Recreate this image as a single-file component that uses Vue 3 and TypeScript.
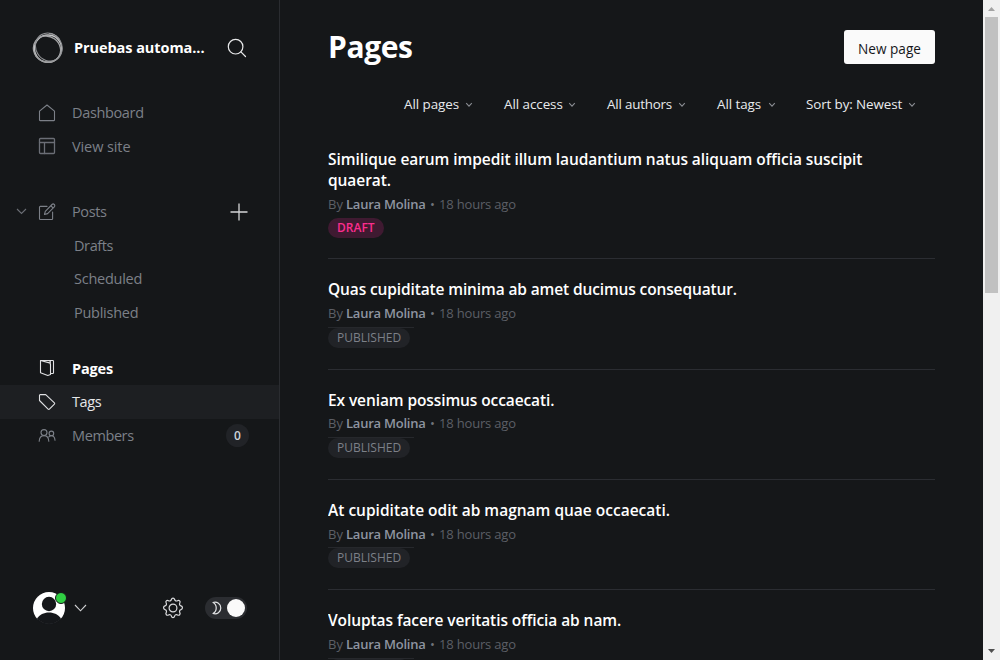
<script setup lang="ts">
interface Page {
  title: string
  status: 'draft' | 'published'
  fit: string
}

const filters = [
  { label: 'All pages', cls: 'f-pages' },
  { label: 'All access', cls: 'f-access' },
  { label: 'All authors', cls: 'f-authors' },
  { label: 'All tags', cls: 'f-tags' },
  { label: 'Sort by: Newest', cls: 'f-sort' },
]

const pages: Page[] = [
  { title: 'Similique earum impedit illum laudantium natus aliquam officia suscipit quaerat.', status: 'draft', fit: 't1' },
  { title: 'Quas cupiditate minima ab amet ducimus consequatur.', status: 'published', fit: 't2' },
  { title: 'Ex veniam possimus occaecati.', status: 'published', fit: 't3' },
  { title: 'At cupiditate odit ab magnam quae occaecati.', status: 'published', fit: 't4' },
  { title: 'Voluptas facere veritatis officia ab nam.', status: 'published', fit: 't5' },
]
</script>

<template>
  <div class="app">
    <aside class="sidebar">
      <header class="brand">
        <svg class="logo" width="32" height="32" viewBox="0 0 32 32" fill="none">
          <circle cx="16" cy="16.600" r="13.600" stroke="#c4c5c6" stroke-width="1.500" />
          <ellipse cx="15.700" cy="17" rx="14" ry="12.800" stroke="#a4a5a7" stroke-width="1.300" transform="rotate(35 15 16)" />
          <ellipse cx="17.200" cy="15.600" rx="13" ry="14.400" stroke="#909295" stroke-width="1.100" transform="rotate(-30 16 16)" />
          <path d="M3.500 24C9 31 20 32 26 26M17 1.500c4 .2 8 2 10.500 6" stroke="#9a9b9d" />
        </svg>
        <span class="site">Pruebas automa...</span>
        <svg class="search" width="20" height="20" viewBox="0 0 20 20" fill="none" stroke="#e8e9ea" stroke-width="1.200" stroke-linecap="round">
          <circle cx="8.600" cy="8.700" r="7.300" /><path d="M13.900 13.900 18.500 18.500" />
        </svg>
      </header>

      <nav class="nav">
        <div class="group g1">
          <a class="row">
            <svg class="ico" viewBox="0 0 18 18"><path d="M1.5 7.2 9 1l7.500 6.200v8.800a.6.6 0 0 1-.6.6H2.100a.6.6 0 0 1-.6-.6z" /></svg>
            <span class="l-dash">Dashboard</span>
          </a>
          <a class="row">
            <svg class="ico dim" viewBox="0 0 18 18"><rect x="1.500" y="1.500" width="15" height="15" rx="1" /><path d="M1.500 5.500h15M6.500 5.500v11" /></svg>
            <span class="l-view">View site</span>
          </a>
        </div>
        <div class="group g2">
          <a class="row">
            <svg class="chev" width="11" height="7" viewBox="0 0 11 7"><path d="M1 1l4.500 4.500L10 1" /></svg>
            <svg class="ico" viewBox="0 0 18 18"><path d="M9 3.400H2.300a.8.800 0 0 0-.8.800v11.500c0 .5.300.8.800.8h11.500a.8.800 0 0 0 .8-.8V9M6.500 11.500l.8-3.200 6.700-6.800a1.500 1.500 0 0 1 2.300 2.300L9.600 10.600zM12.800 2.700l2.300 2.300" /></svg>
            <span class="l-posts">Posts</span>
            <svg class="plus" width="18" height="18" viewBox="0 0 18 18"><path d="M9 .5v17M.5 9h17" /></svg>
          </a>
          <a class="row sub"><span class="l-drafts">Drafts</span></a>
          <a class="row sub"><span class="l-sched">Scheduled</span></a>
          <a class="row sub"><span class="l-publ">Published</span></a>
        </div>
        <div class="group g3">
          <a class="row active">
            <svg class="ico" viewBox="0 0 18 18"><path d="M2.500 1.500h12.200a.8.800 0 0 1 .8.800v11.400a.8.800 0 0 1-.8.800h-2.200M2.500 1.500v12.300l7.300 2.700 2.700-.9V5.300c0-.8-.3-1.100-1-1.400L2.500 1.500M10.500 1.500l1.800.8v3" /></svg>
            <span class="l-pages">Pages</span>
          </a>
          <a class="row hover">
            <svg class="ico" viewBox="0 0 18 18"><path d="M1.500 2.300v5.200l8.600 8.700a.9.900 0 0 0 1.300 0l5-5.100a.9.900 0 0 0 0-1.300L7.700 1.600H2.200a.7.700 0 0 0-.7.700z" /></svg>
            <span class="l-tags">Tags</span>
          </a>
          <a class="row">
            <svg class="ico" viewBox="0 0 18 18"><circle cx="6" cy="6.600" r="3" /><circle cx="13.400" cy="7.400" r="2.300" /><path d="M1.200 15.200c.2-3.300 2-5.600 4.800-5.600s4.600 2.300 4.800 5.600M10.800 10.900c.7-.8 1.500-1.200 2.600-1.200 2.100 0 3.400 1.900 3.600 4.500" /></svg>
            <span class="l-members">Members</span>
            <span class="count">0</span>
          </a>
        </div>
      </nav>

      <footer class="foot">
        <div class="user">
          <svg width="34" height="34" viewBox="0 0 34 34">
            <defs><clipPath id="face"><circle cx="17" cy="17" r="16" /></clipPath></defs>
            <g clip-path="url(#face)">
              <rect width="34" height="34" fill="#fff" />
              <circle cx="17" cy="13" r="7.200" fill="#15171a" />
              <path d="M5 27.500C7.500 23.800 11.800 21.500 17 21.500s9.500 2.300 12 6V34H5z" fill="#15171a" />
            </g>
            <path d="M5.500 28.500a16 16 0 0 0 23 0" fill="none" stroke="#15171a" stroke-width="1.600" />
          </svg>
          <i class="online"></i>
        </div>
        <svg class="user-chev" width="13" height="8" viewBox="0 0 13 8"><path d="M1 1l5.500 5.800L12 1" /></svg>
        <svg class="gear" width="22" height="22" viewBox="0 0 22 22">
          <circle cx="11" cy="11" r="3.900" />
          <path d="M9.400 2.500c.5-1.900 2.700-1.900 3.200 0 .3 1.300 1.700 1.900 2.900 1.200 1.700-1 3.300.6 2.300 2.300-.7 1.200-.1 2.600 1.200 2.900 1.900.5 1.900 3.300 0 3.800-1.300.3-1.900 1.700-1.200 2.900 1 1.700-.6 3.300-2.300 2.300-1.200-.7-2.600-.1-2.900 1.200-.5 1.900-2.700 1.900-3.200 0-.3-1.300-1.700-1.900-2.900-1.200-1.700 1-3.300-.6-2.300-2.300.7-1.200.1-2.600-1.200-2.900-1.900-.5-1.900-3.300 0-3.800C4.300 8.600 4.900 7.200 4.200 6c-1-1.700.6-3.300 2.300-2.300 1.200.7 2.600.1 2.900-1.200z" />
        </svg>
        <div class="toggle">
          <svg width="10" height="14" viewBox="0 0 10 14"><path d="M1 1.500c4-1.300 7.800 1.400 7.800 5.500S5 13.800 1 12.500C5.300 10.300 5.300 3.700 1 1.500z" /></svg>
          <i class="knob"></i>
        </div>
      </footer>
    </aside>

    <main class="main">
      <header class="top">
        <h1>Pages</h1>
        <button class="new"><span>New page</span></button>
      </header>
      <div class="filters">
        <div v-for="f in filters" :key="f.label" class="filter" :class="f.cls">
          <span>{{ f.label }}</span>
          <svg width="8" height="6" viewBox="0 0 8 6"><path d="M1.200 1.200 4 4.200l2.800-3" /></svg>
        </div>
      </div>
      <ul class="list">
        <li v-for="p in pages" :key="p.title" class="item" :class="{ tall: p.status === 'draft' }">
          <h3 :class="p.fit">{{ p.title }}</h3>
          <p class="meta"><span class="by">By</span><b>Laura Molina</b><span class="dot">•</span><span class="ago">18 hours ago</span></p>
          <div class="status" :class="p.status"><span class="badge">{{ p.status.toUpperCase() }}</span></div>
        </li>
      </ul>
    </main>

    <div class="scrollbar">
      <svg width="17" height="17" viewBox="0 0 17 17"><path d="M5 11h7L8.500 7z" fill="#a3a3a3" /></svg>
      <div class="thumb"></div>
      <svg class="down" width="17" height="17" viewBox="0 0 17 17"><path d="M5 6h7l-3.500 4z" fill="#505050" /></svg>
    </div>
  </div>
</template>

<style>
body { background: #15171a; overflow: hidden; }
</style>

<style scoped>
.app {
  display: flex;
  width: 1000px;
  height: 660px;
  overflow: hidden;
  background: #151719;
  color: #fff;
  font-family: "Open Sans", "Noto Sans", sans-serif;
}
.app svg { flex: none; display: block; }
.app span { white-space: nowrap; }
.sidebar {
  box-sizing: border-box;
  width: 280px;
  height: 660px;
  border-right: 1px solid #2a2c30;
  display: flex;
  flex-direction: column;
  flex: none;
}
.brand { display: flex; align-items: center; height: 96px; padding-left: 32px; box-sizing: border-box; }
.site { margin-left: 10px; width: 131px; padding-bottom: 2px; font-size: 14.500px; font-weight: 700; letter-spacing: -0.070px; }
.search { margin-left: 22px; }
.nav { flex: 1; }
.row {
  display: flex;
  align-items: center;
  height: 33.500px;
  padding-left: 38px;
  padding-right: 30px;
  color: #7c8088;
  font-size: 14.500px;
  position: relative;
}
.g2 { margin-top: 32px; }
.g3 { margin-top: 22.500px; }
.l-dash { letter-spacing: -0.350px; }
.l-view { letter-spacing: -0.100px; }
.l-posts, .l-drafts, .l-members, .l-tags { letter-spacing: -0.400px; }
.l-sched, .l-publ { letter-spacing: -0.260px; }
.l-pages { letter-spacing: -0.150px; }
.ico { width: 18px; height: 18px; margin-right: 16px; fill: none; stroke: #7c8088; stroke-width: 1.100; stroke-linejoin: round; stroke-linecap: round; }
.ico.dim { stroke: #6b6e76; stroke-width: 1.300; }
.chev { position: absolute; left: 16px; fill: none; stroke: #6b6e75; stroke-width: 1.100; }
.plus { margin-left: auto; margin-right: 1px; fill: none; stroke: #d5d6d8; stroke-width: 1.300; }
.sub { padding-left: 74px; }
.active { color: #fff; font-weight: 700; }
.active .ico, .hover .ico { stroke: #dfe0e2; }
.hover { background: #1d1f22; color: #e6e7e9; }
.count {
  margin-left: auto;
  width: 23px;
  height: 23px;
  border-radius: 50%;
  background: #212327;
  color: #ced4d9;
  font-size: 12px;
  font-weight: 600;
  line-height: 23px;
  text-align: center;
}
.foot { display: flex; align-items: center; height: 34px; margin-bottom: 35px; padding-left: 32px; }
.user { position: relative; width: 34px; height: 34px; }
.online { position: absolute; right: -1px; top: 1px; width: 10px; height: 10px; border-radius: 50%; background: #30cf43; border: 1px solid #151719; }
.user-chev { margin-left: 8px; fill: none; stroke: #d0d1d3; stroke-width: 1.100; }
.gear { margin-left: 75px; fill: none; stroke: #dcdddf; stroke-width: 1.200; }
.toggle { display: flex; align-items: center; justify-content: space-between; box-sizing: border-box; width: 42px; height: 22px; margin-left: 21px; padding: 0 2px 0 7px; border-radius: 11px; background: #2b2d31; }
.toggle svg { fill: none; stroke: #e3e4e6; stroke-width: 1.200; stroke-linejoin: round; }
.knob { width: 18px; height: 18px; border-radius: 50%; background: #fafafa; }

.main { flex: none; width: 607px; margin-left: 48px; height: 660px; overflow: hidden; }
.top { display: flex; justify-content: space-between; align-items: center; height: 94px; }
h1 { margin: 0; font-size: 30px; font-weight: 700; line-height: 36px; letter-spacing: -0.400px; }
.new { width: 91px; height: 34px; padding: 2px 0 0; border: 0; border-radius: 3px; background: #fafafa; color: #15171a; font-family: inherit; font-size: 13.600px; font-weight: 500; }
.filters { display: flex; justify-content: flex-end; height: 20px; padding-right: 19px; }
.filter { display: flex; align-items: center; justify-content: space-between; font-size: 13.400px; font-weight: 500; color: #e9ebed; margin-left: 31px; letter-spacing: -0.050px; }
.filter svg { fill: none; stroke: #8a8d93; stroke-width: 1.100; margin-top: 2px; }
.f-pages { width: 69px; } .f-access { width: 72px; } .f-authors { width: 79px; letter-spacing: -0.200px; } .f-tags { width: 59px; }
.filter.f-sort { width: 110px; margin-left: 30px; letter-spacing: -0.100px; }
.list { list-style: none; margin: 24.500px 0 0; padding: 0; }
.item { box-sizing: border-box; height: 110.300px; padding-top: 20px; border-bottom: 1px solid #2b2d32; }
.item.tall { height: 120.800px; padding-top: 10px; }
.tall .meta { padding-top: 0.700px; }
h3 { margin: 0; padding-right: 50px; font-size: 15.500px; line-height: 21px; font-weight: 600; }
.t1 { letter-spacing: -0.065px; }
.t3 { letter-spacing: -0.100px; }
.t2 { letter-spacing: -0.130px; }
.t5 { letter-spacing: -0.080px; }
.meta { display: flex; margin: 2.800px 0 3.700px; height: 20px; line-height: 20px; font-size: 13px; color: #5c5f66; }
.by { width: 18px; }
.meta b { font-weight: 600; color: #8e94a0; width: 80px; white-space: nowrap; letter-spacing: -0.240px; }
.dot { width: 13px; text-align: center; color: #70747b; }
.ago { letter-spacing: -0.180px; }
.status { display: flex; width: 86px; height: 21px; box-sizing: border-box; }
.published { border-top: 1px solid #26282c; }
.badge { height: 20px; line-height: 20px; padding: 0 9px; border-radius: 10px; font-size: 12px; font-weight: 500; background: #212327; color: #7c8088; }
.draft .badge { font-weight: 600; color: #fb2d8d; background: #3f1a31; }

.scrollbar { display: flex; flex-direction: column; flex: none; width: 17px; height: 660px; margin-left: auto; background: #f0f0f0; }
.thumb { width: 13px; height: 276px; margin-left: 2px; background: #c1c1c1; }
.down { margin-top: auto; }
</style>
